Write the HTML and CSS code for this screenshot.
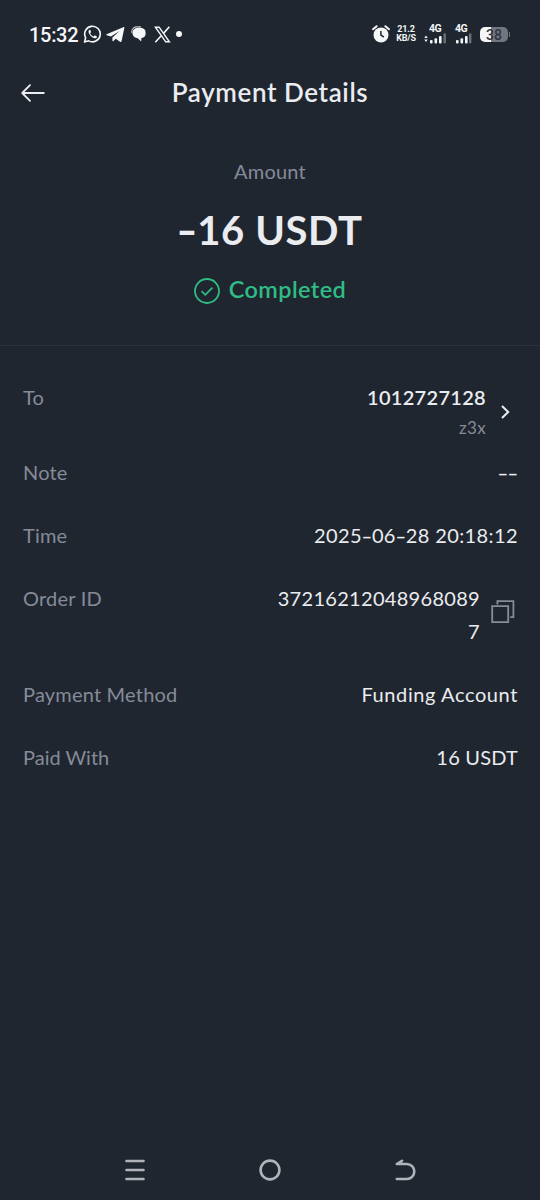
FILE: index.html
```html
<!DOCTYPE html>
<html lang="en">
<head>
    <meta charset="UTF-8">
    <meta name="viewport" content="width=device-width, initial-scale=1.0">
    <title>Payment Details</title>
    <link rel="stylesheet" href="styles.css">
</head>
<body>

    <!-- Status bar -->
    <div class="status-bar">
        <div class="status-left">
            <span class="clock">15:32</span>
            <svg class="icon-whatsapp" width="19" height="20" viewBox="0 0 20 20" fill="none">
                <path d="M1.6 18.4l1.2-4.4A8.2 8.2 0 1 1 6 17.2z" stroke="#f4f6f8" stroke-width="1.7" stroke-linejoin="round"/>
                <path d="M6.9 5.4c-1.3.8-1.4 2.4-.5 4.1 1 2.1 2.7 3.8 4.8 4.7 1.8.7 3.2.1 3.6-1.4l-2.5-1.4-1.2 1.3c-1.7-.7-2.9-1.9-3.6-3.5l1-1.2-.9-2.4z" fill="#f4f6f8"/>
            </svg>
            <svg class="icon-telegram" width="19" height="17" viewBox="0 0 19 17" fill="#f4f6f8">
                <path d="M.6 8.3L17.2 1.2c.8-.3 1.3.1 1.1 1l-2.7 12.9c-.2 1-.9 1.2-1.6.7l-4.3-3.1-2.2 2.3c-.6.6-1.1.4-1.1-.4v-3.1l7.2-6.6-8.7 5.5L.7 9.2c-.5-.2-.6-.6-.1-.9z"/>
            </svg>
            <svg class="icon-chat" width="16" height="16" viewBox="0 0 16 16">
                <path d="M.9 7A5 5 0 0 1 5 .9h5" fill="none" stroke="#b9bdc3" stroke-width="1.1"/>
                <path d="M6.6 1.8h3.2a5.2 5.2 0 0 1 .6 10.3l-.2 3.3-3.5-3.2a5.2 5.2 0 0 1-.1-10.4z" fill="#f4f6f8"/>
            </svg>
            <svg class="icon-x" width="17" height="17" viewBox="0 0 17 17" fill="none" stroke="#f4f6f8">
                <path d="M1.4 1.2h3.7l10.3 14.6h-3.7z" stroke-width="1.4"/>
                <path d="M15.4.8L9.5 7.4M7.2 9.7L1.3 16.2" stroke-width="1.6"/>
            </svg>
            <span class="dot"></span>
        </div>
        <div class="status-right">
            <svg class="icon-alarm" width="18" height="18" viewBox="0 0 18 18">
                <circle cx="9" cy="9.9" r="7.5" fill="#f4f6f8"/>
                <path d="M1 4.2L4.6 1.2M17 4.2L13.4 1.2" stroke="#f4f6f8" stroke-width="2" stroke-linecap="round"/>
                <path d="M8.9 6v4.2l2.9 1.8" fill="none" stroke="#202630" stroke-width="1.5"/>
            </svg>
            <div class="net-speed"><span>21.2</span><span>KB/S</span></div>
            <div class="signal signal-one">
                <span>4G</span>
                <svg width="23" height="11" viewBox="0 0 23 11" fill="#f4f6f8">
                    <path d="M.3 5L2 2.6 3.7 5zM.3 6.6L2 9l1.7-2.4z"/>
                    <rect x="6" y="7" width="2.6" height="3.6" rx="1"/>
                    <rect x="10.5" y="5.3" width="2.6" height="5.3" rx="1"/>
                    <rect x="15" y="3" width="2.6" height="7.6" rx="1"/>
                    <rect x="19.5" y=".2" width="2.4" height="10.4" rx="1" fill="#69707a"/>
                </svg>
            </div>
            <div class="signal signal-two">
                <span>4G</span>
                <svg width="17" height="11" viewBox="0 0 17 11" fill="#f4f6f8">
                    <rect x="1" y="7" width="2.6" height="3.6" rx="1"/>
                    <rect x="5.5" y="5.3" width="2.6" height="5.3" rx="1"/>
                    <rect x="10" y="3" width="2.6" height="7.6" rx="1"/>
                    <rect x="14" y=".2" width="2.4" height="10.4" rx="1" fill="#69707a"/>
                </svg>
            </div>
            <div class="battery">38</div>
            <span class="battery-tip"></span>
        </div>
    </div>

    <!-- Header -->
    <header>
        <svg class="back" width="24" height="18" viewBox="0 0 24 18" fill="none" stroke="#eaecef" stroke-width="1.8" stroke-linecap="round" stroke-linejoin="round">
            <path d="M9 1.2L1.2 9 9 16.8M1.2 9H22.8"/>
        </svg>
        <h1>Payment Details</h1>
    </header>

    <!-- Amount -->
    <section class="summary">
        <p class="summary-label">Amount</p>
        <p class="amount"><span class="minus">-</span><span>16 USDT</span></p>
        <div class="status">
            <svg width="26" height="26" viewBox="0 0 26 26" fill="none" stroke="#2ebd85" stroke-width="1.8">
                <circle cx="13" cy="13" r="12"/>
                <path d="M7.6 13.2l3.7 3.6 7.1-7.1"/>
            </svg>
            <span>Completed</span>
        </div>
    </section>

    <!-- Details -->
    <main class="details">
        <div class="row row-to">
            <span class="label">To</span>
            <div class="value payee">
                <div class="payee-text">
                    <strong>1012727128</strong>
                    <small>z3x</small>
                </div>
                <svg class="chevron" width="9" height="14" viewBox="0 0 9 14" fill="none" stroke="#eaecef" stroke-width="2">
                    <path d="M1 1l6.2 6L1 13"/>
                </svg>
            </div>
        </div>
        <div class="row">
            <span class="label">Note</span>
            <span class="value"><span class="dash">-</span><span class="dash">-</span></span>
        </div>
        <div class="row">
            <span class="label">Time</span>
            <span class="value time">2025<span class="dash">-</span>06<span class="dash">-</span>28 20:18:12</span>
        </div>
        <div class="row">
            <span class="label">Order ID</span>
            <div class="value order">
                <span class="order-id">372162120489680897</span>
                <svg class="copy" width="24" height="24" viewBox="0 0 24 24" fill="none" stroke="#858b98" stroke-width="1.8">
                    <path d="M1.2 6.2h16v16h-16z"/>
                    <path d="M6.4 4.4V1.2h16v16h-3.2"/>
                </svg>
            </div>
        </div>
        <div class="row">
            <span class="label">Payment Method</span>
            <span class="value funding">Funding Account</span>
        </div>
        <div class="row">
            <span class="label paid-label">Paid With</span>
            <span class="value paid">16 USDT</span>
        </div>
    </main>

    <!-- Navigation bar -->
    <nav>
        <svg width="22" height="24" viewBox="0 0 22 24" fill="none" stroke="#b0b3ba" stroke-width="2.6" stroke-linecap="round">
            <path d="M2.5 3h17M2.5 12h17M2.5 21h17"/>
        </svg>
        <svg width="22" height="24" viewBox="0 0 22 24" fill="none" stroke="#b0b3ba" stroke-width="2.6">
            <circle cx="11" cy="12" r="9.4"/>
        </svg>
        <svg width="22" height="24" viewBox="0 0 22 24" fill="none" stroke="#b0b3ba" stroke-width="2.6" stroke-linecap="round" stroke-linejoin="round">
            <path d="M8 2.8L2.8 6h10a7.5 7.5 0 0 1 0 15H2.8"/>
        </svg>
    </nav>

</body>
</html>
```
FILE: styles.css
```css
* {
    margin: 0;
    padding: 0;
    box-sizing: border-box;
}
body {
    background: #202630;
    color: #eaecef;
    font-family: Lato, "Open Sans", sans-serif;
    font-size: 20px;
    min-height: 1200px;
    display: flex;
    flex-direction: column;
}
svg {
    display: block;
    flex-shrink: 0;
}

/* Status bar */
.status-bar {
    height: 68px;
    padding: 0 30px 0 29px;
    display: flex;
    justify-content: space-between;
    align-items: center;
    color: #f4f6f8;
    font-family: Roboto, sans-serif;
}
.status-left, .status-right {
    display: flex;
    align-items: center;
}
.clock {
    width: 50px;
    font-size: 20px;
    font-weight: 500;
    letter-spacing: -0.3px;
    line-height: 24px;
    padding-top: 1px;
    white-space: nowrap;
}
.icon-whatsapp { margin-left: 4px; }
.icon-telegram { margin-left: 4px; }
.icon-chat { margin-left: 6px; }
.icon-x { margin-left: 7px; }
.dot {
    width: 6px;
    height: 6px;
    margin-left: 5px;
    border-radius: 50%;
    background: #f4f6f8;
}
.net-speed {
    width: 20px;
    margin-left: 6px;
    display: flex;
    flex-direction: column;
    align-items: center;
    font-size: 9px;
    font-weight: 700;
    line-height: 9px;
    letter-spacing: -0.2px;
}
.signal {
    margin-left: 8px;
    font-size: 10.5px;
    font-weight: 700;
    line-height: 8px;
    letter-spacing: -0.4px;
    padding-top: 1px;
}
.signal-one span { padding-left: 5px; }
.signal span { display: block; }
.battery {
    width: 28px;
    height: 15px;
    margin-left: 8px;
    border-radius: 5px;
    background: linear-gradient(to right, #f4f6f8 38%, #72777f 38%);
    color: #303640;
    font-size: 14px;
    font-weight: 500;
    line-height: 16px;
    text-align: center;
}
.battery-tip {
    width: 1px;
    height: 5px;
    margin-left: 1px;
    background: #72777f;
}

/* Header */
header {
    height: 50px;
    padding: 0 21px 2px;
    display: grid;
    grid-template-columns: 24px 1fr 24px;
    align-items: center;
}
.back { margin-top: 2px; }
h1 {
    font-size: 26px;
    font-weight: 600;
    line-height: 30px;
    letter-spacing: 0.6px;
    text-align: center;
    white-space: nowrap;
}

/* Amount */
.summary {
    height: 228px;
    padding-top: 38px;
    border-bottom: 1px solid #2b313b;
    display: flex;
    flex-direction: column;
    align-items: center;
}
.summary-label {
    color: #858b98;
    line-height: 30px;
    letter-spacing: 0.2px;
}
.amount {
    margin-top: 19px;
    display: flex;
    font-size: 40px;
    font-weight: 700;
    line-height: 50px;
    letter-spacing: 0.6px;
}
.minus {
    width: 20px;
    letter-spacing: 0;
    text-align: center;
    transform: scaleX(1.4);
}
.status {
    margin-top: 21px;
    display: flex;
    align-items: center;
    gap: 9px;
    color: #2ebd85;
    font-size: 23.5px;
    font-weight: 600;
    line-height: 30px;
    letter-spacing: 0.4px;
}
.status svg { margin-top: 1px; }
.status span { margin-top: -2px; }

/* Details */
.details {
    flex: 1;
    padding: 35px 22px 0 23px;
}
.row {
    margin-bottom: 30px;
    display: flex;
    justify-content: space-between;
    line-height: 33px;
}
.row-to { margin-bottom: 15px; }
.label {
    color: #858b98;
    letter-spacing: 0.2px;
}
.value {
    text-align: right;
    letter-spacing: 0.3px;
}
.dash {
    display: inline-block;
    width: 9.8px;
    letter-spacing: 0;
    text-align: center;
    transform: scaleX(1.5);
}
.time { letter-spacing: 0.4px; }
.payee, .order {
    display: flex;
    align-items: center;
}
.payee-text {
    display: flex;
    flex-direction: column;
}
.payee strong { font-weight: 600; }
.payee small {
    color: #858b98;
    font-size: 17px;
    line-height: 28px;
}
.payee { height: 60px; }
.chevron { margin: 2px 8px 0 15px; }
.order-id {
    width: 206px;
    word-break: break-all;
}
.copy {
    margin: -7px 3px 0 11px;
}
.funding { letter-spacing: 0.6px; }
.paid-label { letter-spacing: 0; }
.paid { letter-spacing: 0.2px; }

/* Navigation bar */
nav {
    height: 60px;
    padding: 0 124px;
    display: flex;
    justify-content: space-between;
    align-items: center;
}
```
